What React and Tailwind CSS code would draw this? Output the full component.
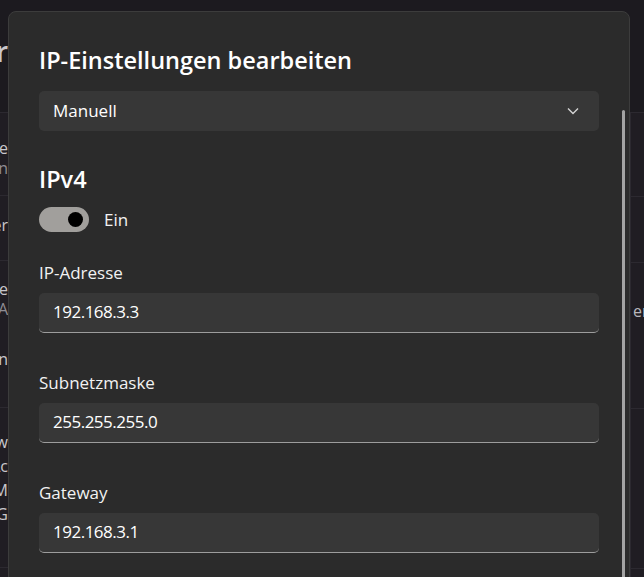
import React, { useState } from "react";

const font = { fontFamily: '"Open Sans", "Noto Sans", sans-serif' };

const Field = ({ label, value, first }) => (
  <div className={first ? "mt-[28px]" : "mt-[38px]"}>
    <div className="h-[24px] leading-[24px] text-[17px] text-[#f2f2f2]">{label}</div>
    <div className="mt-[8px] h-[40px] rounded-[5px] bg-[#373737] border-b border-[#9d9d9d] flex items-center px-[14px]">
      <span className="text-[17px] tracking-[-0.5px] text-white">{value}</span>
    </div>
  </div>
);

const App = () => {
  const [on, setOn] = useState(true);

  return (
    <div className="w-[644px] h-[577px] overflow-hidden bg-[#1c1a1f] flex" style={font}>
      {/* page behind dialog, left edge */}
      <div className="w-[8px] shrink-0 overflow-hidden flex flex-col items-end text-[#c9c7cc]">
        <div className="h-[112px] flex items-center whitespace-nowrap text-[28px] font-semibold pb-[10px]">
          Ether
        </div>
        <div className="h-[83px] w-[300px] border-t border-[#2c2930] bg-[#201d23] flex flex-col items-end justify-center text-[16px] leading-[20px] pt-[8px]">
          <span>Netzwerke</span>
          <span className="text-[#8f8c93]">Verbunden</span>
        </div>
        <div className="h-[65px] w-[300px] border-t border-[#2c2930] bg-[#201d23] flex items-center justify-end text-[16px] pb-[6px]">
          Eigenschaften bearbeiter
        </div>
        <div className="h-[147px] w-[300px] border-t border-[#2c2930] bg-[#201d23] flex flex-col items-end text-[16px] leading-[20px] pt-[18px]">
          <span>Automatische Konfigurationte</span>
          <span className="text-[#8f8c93]">Netzwerk A</span>
          <span className="mt-[30px]">Schließen</span>
        </div>
        <div className="h-[160px] w-[300px] border-t border-[#2c2930] bg-[#201d23] flex flex-col items-end text-[16px] leading-[24px] pt-[22px]">
          <span>IP-Zuw</span>
          <span>IPv4-Ac</span>
          <span>IPv4-M</span>
          <span>IPv4-G</span>
        </div>
        <div className="w-[300px] grow border-t border-[#2c2930] bg-[#201d23]" />
      </div>

      {/* dialog */}
      <div className="relative mt-[11px] w-[622px] shrink-0 h-[600px] rounded-t-[8px] border border-[#3c3c3c] bg-[#2b2b2b] px-[30px] pt-[32px]">
        <h1 className="h-[32px] leading-[32px] text-[23.5px] font-semibold text-white">
          IP-Einstellungen bearbeiten
        </h1>

        <button className="mt-[15px] w-full h-[40px] rounded-[5px] bg-[#373737] flex items-center justify-between pl-[14px] pr-[20px]">
          <span className="text-[17px] text-white">Manuell</span>
          <svg width="12" height="8" viewBox="0 0 12 8" fill="none">
            <path d="M1 1.5 L6 6.5 L11 1.5" stroke="#d4d4d4" strokeWidth="1.4" />
          </svg>
        </button>

        <h2 className="mt-[32px] h-[32px] leading-[32px] text-[23.5px] font-semibold text-white">IPv4</h2>

        <div className="mt-[12px] flex items-center gap-[15px]">
          <button
            onClick={() => setOn(!on)}
            className={`w-[50px] h-[25px] rounded-full bg-[#a19f9c] flex items-center px-[6px] ${on ? "justify-end" : "justify-start"}`}
          >
            <span className="block w-[15px] h-[15px] rounded-full bg-black" />
          </button>
          <span className="text-[17px] text-[#f2f2f2]">{on ? "Ein" : "Aus"}</span>
        </div>

        <Field label="IP-Adresse" value="192.168.3.3" first />
        <Field label="Subnetzmaske" value="255.255.255.0" />
        <Field label="Gateway" value="192.168.3.1" />

        {/* scrollbar */}
        <div className="absolute right-[4px] top-[98px] bottom-0 w-[3px] rounded-full bg-[#a3a3a3]" />
      </div>

      {/* page behind dialog, right edge */}
      <div className="grow overflow-hidden flex flex-col text-[#b9b7bc]">
        <div className="h-[112px] shrink-0" />
        <div className="h-[84px] shrink-0 border-t border-l border-[#2c2930] bg-[#201d23]" />
        <div className="h-[66px] shrink-0 border-t border-l border-[#2c2930] bg-[#201d23]" />
        <div className="h-[146px] shrink-0 border-t border-l border-[#2c2930] bg-[#201d23] pt-[36px] pl-[2px] text-[16px] whitespace-nowrap">
          erbinden
        </div>
        <div className="h-[160px] shrink-0 border-t border-l border-[#2c2930] bg-[#201d23]" />
        <div className="grow border-t border-l border-[#2c2930] bg-[#201d23]" />
      </div>
    </div>
  );
};

export default App;
